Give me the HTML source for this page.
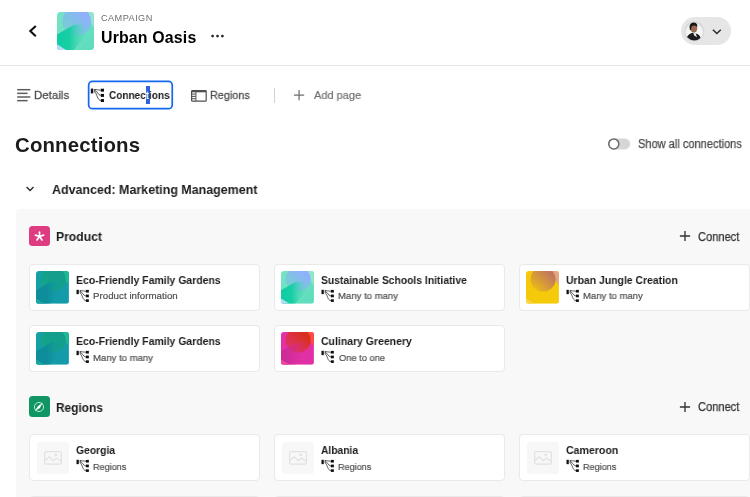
<!DOCTYPE html>
<html lang="en">
<head>
<meta charset="utf-8">
<title>Urban Oasis – Connections</title>
<style>
*{box-sizing:border-box;margin:0;padding:0}
html,body{width:750px;height:497px;overflow:hidden;background:#fff}
body{position:relative;font-family:"Liberation Sans",sans-serif;color:#222}
.t{position:absolute;white-space:nowrap;transform-origin:0 50%;will-change:transform}
.a{position:absolute}
.hdr{left:0;top:0;width:750px;height:66px;border-bottom:1px solid #e3e3e3;background:#fff}
.panel{left:16px;top:209px;width:734px;height:288px;background:#f8f8f8;border-radius:4px 0 0 0}
.card{position:absolute;width:231px;height:47px;background:#fff;border:1px solid #e9e9e9;border-radius:4px}
.thumb{position:absolute;left:6.3px;top:6px;width:32.9px;height:32.6px;border-radius:3px;overflow:hidden;display:block}
.ph{background:#f7f7f7;left:6.5px;top:6.6px;width:32.5px;height:32.4px}
svg{display:block;overflow:visible}
</style>
</head>
<body>
<div class="a hdr"></div>
<svg class="a" style="left:27px;top:23px" width="12" height="16" viewBox="0 0 12 16"><path d="M8.8 2.9L3.3 8.1L8.8 13.3" fill="none" stroke="#111" stroke-width="2.1"/></svg>
<div class="a" style="left:56.6px;top:12px;width:37.8px;height:38.2px"><div style="position:relative;width:100%;height:100%"><svg class="a" style="left:0;top:0;width:100%;height:100%;border-radius:3.5px;overflow:hidden" viewBox="0 0 32 32" preserveAspectRatio="none"><defs>
<linearGradient id="bh" x1="0" y1="0" x2="1" y2="1"><stop offset="0" stop-color="#79e3c6"/><stop offset="1" stop-color="#5bdcbb"/></linearGradient>
<linearGradient id="ch" x1="0" y1="1" x2="1" y2="0"><stop offset="0.1" stop-color="#72d2cc"/><stop offset="0.75" stop-color="#8fb1fb"/></linearGradient>
<linearGradient id="dh" x1="0" y1="0" x2="1" y2="0"><stop offset="0" stop-color="#0ecda2" stop-opacity="1"/><stop offset="0.35" stop-color="#0ecda2" stop-opacity="0.9"/><stop offset="0.85" stop-color="#4fd9b7" stop-opacity="0"/></linearGradient>
</defs>
<rect width="32" height="32" fill="url(#bh)"/>
<path d="M22 0H32V14Z" fill="#8fe6cf"/>
<circle cx="16.6" cy="8" r="12.2" fill="url(#ch)"/>
<path d="M0 18.8L14.5 10.6L30 10.6L30 13L14 32H0Z" fill="url(#dh)"/>
<path d="M0 27L8 32H0Z" fill="#b9dcf4"/>
</svg></div></div>
<svg class="a" style="left:210px;top:33px" width="16" height="6" viewBox="0 0 16 6"><g fill="#222"><circle cx="2.6" cy="3.1" r="1.35"/><circle cx="7.5" cy="3.1" r="1.35"/><circle cx="12.4" cy="3.1" r="1.35"/></g></svg>
<div class="a" style="left:681.3px;top:17.2px;width:49.8px;height:27.5px;border-radius:14px;background:#e6e6e6"></div>
<svg class="a" style="left:684.4px;top:20.5px" width="20.6" height="20.6" viewBox="0 0 20.6 20.6"><defs><radialGradient id="av" cx=".5" cy=".55" r=".55"><stop offset="0" stop-color="#fff"/><stop offset=".75" stop-color="#f4f4f4"/><stop offset="1" stop-color="#cfcfcf"/></radialGradient><clipPath id="avc"><circle cx="10.3" cy="10.3" r="9.3"/></clipPath></defs><circle cx="10.3" cy="10.3" r="10.3" fill="#dadada"/><circle cx="10.3" cy="10.3" r="9.3" fill="url(#av)"/><g clip-path="url(#avc)"><g transform="translate(10 11.2) scale(1.13) translate(-10 -12)"><path d="M2.8 20.6C3 16 5.5 13.6 8.6 12.6L11.4 13.2C14 13.6 16 15.2 16.6 20.6Z" fill="#1d1d1f"/><path d="M9.2 12.4L11.6 13.2L12.6 16.8L10.2 14.6Z" fill="#f2f2f2"/><ellipse cx="9.9" cy="8.6" rx="2.9" ry="3.8" fill="#9a6a4c"/><path d="M6.3 9.6C5.4 5.4 7.4 3.4 10 3.5C12.3 3.6 13.3 5.4 12.8 7.6C11.8 6 10 5.6 8.2 6.6C7.6 7.6 7.4 8.8 7.5 10.4Z" fill="#151515"/></g></g></svg>
<svg class="a" style="left:711px;top:27px" width="12" height="9" viewBox="0 0 12 9"><path d="M1.9 2.7L5.85 6.5L9.8 2.7" fill="none" stroke="#2c2c2c" stroke-width="1.5"/></svg>
<svg class="a" style="left:17px;top:88px" width="14" height="14" viewBox="0 0 14 14"><g stroke="#5c5c5c" stroke-width="1.5"><path d="M.2 1.7H13.3"/><path d="M.2 5.35H10.6"/><path d="M.2 9H13.3"/><path d="M.2 12.65H10.6"/></g></svg>
<svg class="a" style="left:86px;top:79px" width="90" height="33" viewBox="86 79 90 33"><rect x="88.65" y="81.4" width="83.6" height="27.3" rx="3.8" fill="#fff" stroke="#1468f0" stroke-width="1.7"/></svg>
<svg class="a" style="left:90px;top:88px" width="16" height="16" viewBox="0 0 16 16"><g transform="translate(0.80 0.60) scale(1.0 1.0)"><g fill="#111"><rect x="0" y="0" width="2.45" height="4.8"/><rect x="10" y="0.1" width="3.2" height="2.95"/><rect x="10" y="5.3" width="3.2" height="3"/><rect x="10" y="10.5" width="3.2" height="2.9"/></g><g fill="none" stroke="#111" stroke-width=".72"><path d="M3.6 .8C5.8 .8 7.5 1.6 10 1.6"/><path d="M3.9 2C6.8 2.4 6.9 6.6 10 6.8"/><path d="M4.1 3.6C6.5 5.4 6.3 11.6 10 11.9"/><path d="M3.9 .6V3.7"/></g></g></svg>
<div class="a" style="left:146.4px;top:86px;width:3.9px;height:17.6px;background:#2f63d9"></div>
<svg class="a" style="left:191px;top:89.8px" width="16" height="12" viewBox="0 0 16 12"><rect x=".6" y=".6" width="14.6" height="10.6" rx=".8" fill="none" stroke="#505050" stroke-width="1.2"/><path d="M.6 1.6H15.2" stroke="#505050" stroke-width="1.4"/><path d="M4.9 1.5V11" stroke="#505050" stroke-width="1"/><path d="M1 4.1H4.6M1 6.4H4.6M1 8.7H4.6" stroke="#505050" stroke-width="1"/></svg>
<div class="a" style="left:273.7px;top:87.5px;width:1px;height:15.5px;background:#d3d3d3"></div>
<svg class="a" style="left:293px;top:89px" width="12" height="12" viewBox="0 0 12 12"><path d="M6.05 1.1V11.3M.95 6.2H11.15" stroke="#6e6e6e" stroke-width="1.25" fill="none"/></svg>
<svg class="a" style="left:606px;top:136px" width="26" height="16" viewBox="606 136 26 16"><rect x="608" y="138.4" width="22.2" height="11" rx="5.5" fill="#d6d6d6"/><circle cx="613.8" cy="143.9" r="5" fill="#fff" stroke="#6a6a6a" stroke-width="1.5"/></svg>
<svg class="a" style="left:25px;top:184px" width="12" height="10" viewBox="0 0 12 10"><path d="M1.6 3.05L5.05 6.5L8.5 3.05" fill="none" stroke="#2c2c2c" stroke-width="1.4"/></svg>
<div class="a panel"></div>
<div class="a" style="left:29.2px;top:225.8px;width:20.6px;height:20.7px;border-radius:3.5px;background:#de3b80"></div><svg class="a" style="left:34.05px;top:231.3px" width="11" height="11" viewBox="-5 -5 10 10"><g stroke="#fff" stroke-width="1.55" stroke-linecap="round"><path d="M0 0L0 -3.9"/><path d="M0 0L3.7 -1.2"/><path d="M0 0L2.3 3.15"/><path d="M0 0L-2.3 3.15"/><path d="M0 0L-3.7 -1.2"/></g></svg>
<div class="a" style="left:29.2px;top:396.3px;width:20.7px;height:20.6px;border-radius:3.5px;background:#0f9663"></div><svg class="a" style="left:33.3px;top:400.8px" width="12" height="12" viewBox="-6 -6 12 12"><circle r="4.6" fill="none" stroke="#c8ecdc" stroke-width=".9"/><path d="M-4.4 4.2L-0.9 -0.9L3.8 -4.4L0.9 0.9Z" fill="#fff"/></svg>
<svg class="a" style="left:679.4px;top:230.2px" width="12" height="12" viewBox="0 0 12 12"><path d="M6 .9V11.1M.9 6H11.1" stroke="#333" stroke-width="1.35" fill="none"/></svg>
<svg class="a" style="left:679.4px;top:400.6px" width="12" height="12" viewBox="0 0 12 12"><path d="M6 .9V11.1M.9 6H11.1" stroke="#333" stroke-width="1.35" fill="none"/></svg>
<div class="card" style="left:29px;top:264px"><svg class="thumb" viewBox="0 0 32 32" preserveAspectRatio="none"><defs>
<linearGradient id="bk0" x1="0" y1="0" x2="1" y2="1"><stop offset="0" stop-color="#17a0a6"/><stop offset="1" stop-color="#149aab"/></linearGradient>
<linearGradient id="ck0" x1="0" y1="1" x2="1" y2="0"><stop offset="0.1" stop-color="#12a58a"/><stop offset="0.75" stop-color="#149d8c"/></linearGradient>
<linearGradient id="dk0" x1="0" y1="0" x2="1" y2="0"><stop offset="0" stop-color="#0d8c99" stop-opacity="1"/><stop offset="0.35" stop-color="#0d8c99" stop-opacity="0.9"/><stop offset="0.85" stop-color="#1399a6" stop-opacity="0"/></linearGradient>
</defs>
<rect width="32" height="32" fill="url(#bk0)"/>
<path d="M22 0H32V14Z" fill="#1db895"/>
<circle cx="16.6" cy="8" r="12.2" fill="url(#ck0)"/>
<path d="M0 18.8L14.5 10.6L30 10.6L30 13L14 32H0Z" fill="url(#dk0)"/>
<path d="M0 27L8 32H0Z" fill="#19a9a4"/>
</svg></div>
<svg class="a" style="left:76px;top:289px" width="16" height="16" viewBox="0 0 16 16"><g transform="translate(0.50 0.80) scale(0.935 0.905)"><g fill="#111"><rect x="0" y="0" width="2.45" height="4.8"/><rect x="10" y="0.1" width="3.2" height="2.95"/><rect x="10" y="5.3" width="3.2" height="3"/><rect x="10" y="10.5" width="3.2" height="2.9"/></g><g fill="none" stroke="#111" stroke-width=".72"><path d="M3.6 .8C5.8 .8 7.5 1.6 10 1.6"/><path d="M3.9 2C6.8 2.4 6.9 6.6 10 6.8"/><path d="M4.1 3.6C6.5 5.4 6.3 11.6 10 11.9"/><path d="M3.9 .6V3.7"/></g></g></svg>
<div class="card" style="left:274px;top:264px"><svg class="thumb" viewBox="0 0 32 32" preserveAspectRatio="none"><defs>
<linearGradient id="bk1" x1="0" y1="0" x2="1" y2="1"><stop offset="0" stop-color="#79e3c6"/><stop offset="1" stop-color="#5bdcbb"/></linearGradient>
<linearGradient id="ck1" x1="0" y1="1" x2="1" y2="0"><stop offset="0.1" stop-color="#72d2cc"/><stop offset="0.75" stop-color="#8fb1fb"/></linearGradient>
<linearGradient id="dk1" x1="0" y1="0" x2="1" y2="0"><stop offset="0" stop-color="#0ecda2" stop-opacity="1"/><stop offset="0.35" stop-color="#0ecda2" stop-opacity="0.9"/><stop offset="0.85" stop-color="#4fd9b7" stop-opacity="0"/></linearGradient>
</defs>
<rect width="32" height="32" fill="url(#bk1)"/>
<path d="M22 0H32V14Z" fill="#8fe6cf"/>
<circle cx="16.6" cy="8" r="12.2" fill="url(#ck1)"/>
<path d="M0 18.8L14.5 10.6L30 10.6L30 13L14 32H0Z" fill="url(#dk1)"/>
<path d="M0 27L8 32H0Z" fill="#b9dcf4"/>
</svg></div>
<svg class="a" style="left:321px;top:289px" width="16" height="16" viewBox="0 0 16 16"><g transform="translate(0.50 0.80) scale(0.935 0.905)"><g fill="#111"><rect x="0" y="0" width="2.45" height="4.8"/><rect x="10" y="0.1" width="3.2" height="2.95"/><rect x="10" y="5.3" width="3.2" height="3"/><rect x="10" y="10.5" width="3.2" height="2.9"/></g><g fill="none" stroke="#111" stroke-width=".72"><path d="M3.6 .8C5.8 .8 7.5 1.6 10 1.6"/><path d="M3.9 2C6.8 2.4 6.9 6.6 10 6.8"/><path d="M4.1 3.6C6.5 5.4 6.3 11.6 10 11.9"/><path d="M3.9 .6V3.7"/></g></g></svg>
<div class="card" style="left:519px;top:264px"><svg class="thumb" viewBox="0 0 32 32" preserveAspectRatio="none"><defs>
<linearGradient id="bk2" x1="0" y1="0" x2="1" y2="1"><stop offset="0" stop-color="#f4c80c"/><stop offset="1" stop-color="#f5cb0a"/></linearGradient>
<linearGradient id="ck2" x1="0" y1="1" x2="1" y2="0"><stop offset="0.1" stop-color="#edb818"/><stop offset="0.75" stop-color="#c0795c"/></linearGradient>
<linearGradient id="dk2" x1="0" y1="0" x2="1" y2="0"><stop offset="0" stop-color="#f3c60a" stop-opacity="0.3"/><stop offset="0.35" stop-color="#f3c60a" stop-opacity="0.1"/><stop offset="0.85" stop-color="#f5ca0c" stop-opacity="0"/></linearGradient>
</defs>
<rect width="32" height="32" fill="url(#bk2)"/>
<path d="M22 0H32V14Z" fill="#e4a680"/>
<circle cx="16.6" cy="8" r="12.2" fill="url(#ck2)"/>
<path d="M0 18.8L14.5 10.6L30 10.6L30 13L14 32H0Z" fill="url(#dk2)"/>
<path d="M0 27L8 32H0Z" fill="#f8d648"/>
</svg></div>
<svg class="a" style="left:566px;top:289px" width="16" height="16" viewBox="0 0 16 16"><g transform="translate(0.50 0.80) scale(0.935 0.905)"><g fill="#111"><rect x="0" y="0" width="2.45" height="4.8"/><rect x="10" y="0.1" width="3.2" height="2.95"/><rect x="10" y="5.3" width="3.2" height="3"/><rect x="10" y="10.5" width="3.2" height="2.9"/></g><g fill="none" stroke="#111" stroke-width=".72"><path d="M3.6 .8C5.8 .8 7.5 1.6 10 1.6"/><path d="M3.9 2C6.8 2.4 6.9 6.6 10 6.8"/><path d="M4.1 3.6C6.5 5.4 6.3 11.6 10 11.9"/><path d="M3.9 .6V3.7"/></g></g></svg>
<div class="card" style="left:29px;top:325px"><svg class="thumb" viewBox="0 0 32 32" preserveAspectRatio="none"><defs>
<linearGradient id="bk3" x1="0" y1="0" x2="1" y2="1"><stop offset="0" stop-color="#17a0a6"/><stop offset="1" stop-color="#149aab"/></linearGradient>
<linearGradient id="ck3" x1="0" y1="1" x2="1" y2="0"><stop offset="0.1" stop-color="#12a58a"/><stop offset="0.75" stop-color="#149d8c"/></linearGradient>
<linearGradient id="dk3" x1="0" y1="0" x2="1" y2="0"><stop offset="0" stop-color="#0d8c99" stop-opacity="1"/><stop offset="0.35" stop-color="#0d8c99" stop-opacity="0.9"/><stop offset="0.85" stop-color="#1399a6" stop-opacity="0"/></linearGradient>
</defs>
<rect width="32" height="32" fill="url(#bk3)"/>
<path d="M22 0H32V14Z" fill="#1db895"/>
<circle cx="16.6" cy="8" r="12.2" fill="url(#ck3)"/>
<path d="M0 18.8L14.5 10.6L30 10.6L30 13L14 32H0Z" fill="url(#dk3)"/>
<path d="M0 27L8 32H0Z" fill="#19a9a4"/>
</svg></div>
<svg class="a" style="left:76px;top:350px" width="16" height="16" viewBox="0 0 16 16"><g transform="translate(0.50 0.80) scale(0.935 0.905)"><g fill="#111"><rect x="0" y="0" width="2.45" height="4.8"/><rect x="10" y="0.1" width="3.2" height="2.95"/><rect x="10" y="5.3" width="3.2" height="3"/><rect x="10" y="10.5" width="3.2" height="2.9"/></g><g fill="none" stroke="#111" stroke-width=".72"><path d="M3.6 .8C5.8 .8 7.5 1.6 10 1.6"/><path d="M3.9 2C6.8 2.4 6.9 6.6 10 6.8"/><path d="M4.1 3.6C6.5 5.4 6.3 11.6 10 11.9"/><path d="M3.9 .6V3.7"/></g></g></svg>
<div class="card" style="left:274px;top:325px"><svg class="thumb" viewBox="0 0 32 32" preserveAspectRatio="none"><defs>
<linearGradient id="bk4" x1="0" y1="0" x2="1" y2="1"><stop offset="0" stop-color="#e331a8"/><stop offset="1" stop-color="#e130a4"/></linearGradient>
<linearGradient id="ck4" x1="0" y1="1" x2="1" y2="0"><stop offset="0.1" stop-color="#e0336c"/><stop offset="0.75" stop-color="#d8301e"/></linearGradient>
<linearGradient id="dk4" x1="0" y1="0" x2="1" y2="0"><stop offset="0" stop-color="#cb2a94" stop-opacity="1"/><stop offset="0.35" stop-color="#cb2a94" stop-opacity="0.55"/><stop offset="0.85" stop-color="#dc2fa2" stop-opacity="0"/></linearGradient>
</defs>
<rect width="32" height="32" fill="url(#bk4)"/>
<path d="M22 0H32V14Z" fill="#ff4c3c"/>
<circle cx="16.6" cy="8" r="12.2" fill="url(#ck4)"/>
<path d="M0 18.8L14.5 10.6L30 10.6L30 13L14 32H0Z" fill="url(#dk4)"/>
<path d="M0 27L8 32H0Z" fill="#ee4aa0"/>
</svg></div>
<svg class="a" style="left:321px;top:350px" width="16" height="16" viewBox="0 0 16 16"><g transform="translate(0.50 0.80) scale(0.935 0.905)"><g fill="#111"><rect x="0" y="0" width="2.45" height="4.8"/><rect x="10" y="0.1" width="3.2" height="2.95"/><rect x="10" y="5.3" width="3.2" height="3"/><rect x="10" y="10.5" width="3.2" height="2.9"/></g><g fill="none" stroke="#111" stroke-width=".72"><path d="M3.6 .8C5.8 .8 7.5 1.6 10 1.6"/><path d="M3.9 2C6.8 2.4 6.9 6.6 10 6.8"/><path d="M4.1 3.6C6.5 5.4 6.3 11.6 10 11.9"/><path d="M3.9 .6V3.7"/></g></g></svg>
<div class="card" style="left:29px;top:434px"><div class="thumb ph"><svg class="a" style="left:7.3px;top:9.6px" width="18" height="14" viewBox="0 0 18 14"><rect x=".6" y=".6" width="16.8" height="12.6" rx="1.6" fill="none" stroke="#e2e2e2" stroke-width="1.2"/><path d="M1 9.5L5.2 5.8L9.3 9.6L12.6 7.2L17 10.3" fill="none" stroke="#e2e2e2" stroke-width="1.2"/><circle cx="11.7" cy="3.9" r="1.3" fill="#e2e2e2"/></svg></div></div>
<svg class="a" style="left:76px;top:459px" width="16" height="16" viewBox="0 0 16 16"><g transform="translate(0.50 0.80) scale(0.935 0.905)"><g fill="#111"><rect x="0" y="0" width="2.45" height="4.8"/><rect x="10" y="0.1" width="3.2" height="2.95"/><rect x="10" y="5.3" width="3.2" height="3"/><rect x="10" y="10.5" width="3.2" height="2.9"/></g><g fill="none" stroke="#111" stroke-width=".72"><path d="M3.6 .8C5.8 .8 7.5 1.6 10 1.6"/><path d="M3.9 2C6.8 2.4 6.9 6.6 10 6.8"/><path d="M4.1 3.6C6.5 5.4 6.3 11.6 10 11.9"/><path d="M3.9 .6V3.7"/></g></g></svg>
<div class="card" style="left:274px;top:434px"><div class="thumb ph"><svg class="a" style="left:7.3px;top:9.6px" width="18" height="14" viewBox="0 0 18 14"><rect x=".6" y=".6" width="16.8" height="12.6" rx="1.6" fill="none" stroke="#e2e2e2" stroke-width="1.2"/><path d="M1 9.5L5.2 5.8L9.3 9.6L12.6 7.2L17 10.3" fill="none" stroke="#e2e2e2" stroke-width="1.2"/><circle cx="11.7" cy="3.9" r="1.3" fill="#e2e2e2"/></svg></div></div>
<svg class="a" style="left:321px;top:459px" width="16" height="16" viewBox="0 0 16 16"><g transform="translate(0.50 0.80) scale(0.935 0.905)"><g fill="#111"><rect x="0" y="0" width="2.45" height="4.8"/><rect x="10" y="0.1" width="3.2" height="2.95"/><rect x="10" y="5.3" width="3.2" height="3"/><rect x="10" y="10.5" width="3.2" height="2.9"/></g><g fill="none" stroke="#111" stroke-width=".72"><path d="M3.6 .8C5.8 .8 7.5 1.6 10 1.6"/><path d="M3.9 2C6.8 2.4 6.9 6.6 10 6.8"/><path d="M4.1 3.6C6.5 5.4 6.3 11.6 10 11.9"/><path d="M3.9 .6V3.7"/></g></g></svg>
<div class="card" style="left:519px;top:434px"><div class="thumb ph"><svg class="a" style="left:7.3px;top:9.6px" width="18" height="14" viewBox="0 0 18 14"><rect x=".6" y=".6" width="16.8" height="12.6" rx="1.6" fill="none" stroke="#e2e2e2" stroke-width="1.2"/><path d="M1 9.5L5.2 5.8L9.3 9.6L12.6 7.2L17 10.3" fill="none" stroke="#e2e2e2" stroke-width="1.2"/><circle cx="11.7" cy="3.9" r="1.3" fill="#e2e2e2"/></svg></div></div>
<svg class="a" style="left:566px;top:459px" width="16" height="16" viewBox="0 0 16 16"><g transform="translate(0.50 0.80) scale(0.935 0.905)"><g fill="#111"><rect x="0" y="0" width="2.45" height="4.8"/><rect x="10" y="0.1" width="3.2" height="2.95"/><rect x="10" y="5.3" width="3.2" height="3"/><rect x="10" y="10.5" width="3.2" height="2.9"/></g><g fill="none" stroke="#111" stroke-width=".72"><path d="M3.6 .8C5.8 .8 7.5 1.6 10 1.6"/><path d="M3.9 2C6.8 2.4 6.9 6.6 10 6.8"/><path d="M4.1 3.6C6.5 5.4 6.3 11.6 10 11.9"/><path d="M3.9 .6V3.7"/></g></g></svg>
<div class="card" style="left:29px;top:496px"></div>
<div class="card" style="left:274px;top:496px"></div>
<div class="card" style="left:519px;top:496px"></div>
<div class="t" style="left:101.2px;top:14.0px;font-size:9.2px;line-height:9.2px;font-weight:400;color:#6e6e6e;letter-spacing:0.429px;">CAMPAIGN</div>
<div class="t" style="left:100.6px;top:30.0px;font-size:15.9px;line-height:15.9px;font-weight:700;color:#000;letter-spacing:0.160px;">Urban Oasis</div>
<div class="t" style="left:33.9px;top:89.0px;font-size:11.6px;line-height:11.6px;font-weight:400;color:#505050;transform:scaleX(0.9912);-webkit-text-stroke:.3px #505050">Details</div>
<div class="t" style="left:210.2px;top:89.0px;font-size:11.6px;line-height:11.6px;font-weight:400;color:#505050;transform:scaleX(0.9366);-webkit-text-stroke:.3px #505050">Regions</div>
<div class="t" style="left:109.4px;top:90.0px;font-size:11.4px;line-height:11.4px;font-weight:700;color:#1c1c1c;transform:scaleX(0.8783);;color:transparent;background:linear-gradient(90deg,#1c1c1c 0,#1c1c1c 41.77px,#fff 41.77px,#fff 45.58px,#1c1c1c 45.58px);-webkit-background-clip:text;background-clip:text">Connections</div>
<div class="t" style="left:313.7px;top:89.0px;font-size:11.6px;line-height:11.6px;font-weight:400;color:#6e6e6e;transform:scaleX(0.9490);-webkit-text-stroke:.2px #6e6e6e">Add page</div>
<div class="t" style="left:15.2px;top:135.0px;font-size:20.4px;line-height:20.4px;font-weight:700;color:#1c1c1c;letter-spacing:0.160px;">Connections</div>
<div class="t" style="left:638.3px;top:138.0px;font-size:12px;line-height:12px;font-weight:400;color:#4b4b4b;transform:scaleX(0.9207);-webkit-text-stroke:.25px #4b4b4b">Show all connections</div>
<div class="t" style="left:51.5px;top:183.0px;font-size:13.1px;line-height:13.1px;font-weight:700;color:#1c1c1c;transform:scaleX(0.9505);">Advanced: Marketing Management</div>
<div class="t" style="left:56.2px;top:231.0px;font-size:12.6px;line-height:12.6px;font-weight:700;color:#1c1c1c;transform:scaleX(0.9638);">Product</div>
<div class="t" style="left:698.3px;top:231.0px;font-size:12px;line-height:12px;font-weight:400;color:#333;transform:scaleX(0.9256);-webkit-text-stroke:.25px #333">Connect</div>
<div class="t" style="left:56.3px;top:402.0px;font-size:12.6px;line-height:12.6px;font-weight:700;color:#1c1c1c;transform:scaleX(0.9437);">Regions</div>
<div class="t" style="left:698.3px;top:401.0px;font-size:12px;line-height:12px;font-weight:400;color:#333;transform:scaleX(0.9256);-webkit-text-stroke:.25px #333">Connect</div>
<div class="t" style="left:75.5px;top:275.0px;font-size:11.2px;line-height:11.2px;font-weight:700;color:#1c1c1c;transform:scaleX(0.9346);">Eco-Friendly Family Gardens</div>
<div class="t" style="left:92.6px;top:291.0px;font-size:9.7px;line-height:9.7px;font-weight:400;color:#4e4e4e;letter-spacing:0.039px;-webkit-text-stroke:.2px #4e4e4e">Product information</div>
<div class="t" style="left:321.4px;top:275.0px;font-size:11.2px;line-height:11.2px;font-weight:700;color:#1c1c1c;transform:scaleX(0.9234);">Sustainable Schools Initiative</div>
<div class="t" style="left:337.6px;top:291.0px;font-size:9.7px;line-height:9.7px;font-weight:400;color:#4e4e4e;transform:scaleX(0.9867);-webkit-text-stroke:.2px #4e4e4e">Many to many</div>
<div class="t" style="left:565.5px;top:275.0px;font-size:11.2px;line-height:11.2px;font-weight:700;color:#1c1c1c;transform:scaleX(0.9314);">Urban Jungle Creation</div>
<div class="t" style="left:582.6px;top:291.0px;font-size:9.7px;line-height:9.7px;font-weight:400;color:#4e4e4e;transform:scaleX(0.9833);-webkit-text-stroke:.2px #4e4e4e">Many to many</div>
<div class="t" style="left:75.5px;top:336.0px;font-size:11.2px;line-height:11.2px;font-weight:700;color:#1c1c1c;transform:scaleX(0.9346);">Eco-Friendly Family Gardens</div>
<div class="t" style="left:92.6px;top:353.0px;font-size:9.7px;line-height:9.7px;font-weight:400;color:#4e4e4e;transform:scaleX(0.9867);-webkit-text-stroke:.2px #4e4e4e">Many to many</div>
<div class="t" style="left:321.4px;top:336.0px;font-size:11.2px;line-height:11.2px;font-weight:700;color:#1c1c1c;transform:scaleX(0.9361);">Culinary Greenery</div>
<div class="t" style="left:338.6px;top:353.0px;font-size:9.7px;line-height:9.7px;font-weight:400;color:#4e4e4e;transform:scaleX(0.9596);-webkit-text-stroke:.2px #4e4e4e">One to one</div>
<div class="t" style="left:76.4px;top:445.0px;font-size:11.2px;line-height:11.2px;font-weight:700;color:#1c1c1c;transform:scaleX(0.9238);">Georgia</div>
<div class="t" style="left:92.7px;top:462.0px;font-size:9.7px;line-height:9.7px;font-weight:400;color:#4e4e4e;transform:scaleX(0.9353);-webkit-text-stroke:.2px #4e4e4e">Regions</div>
<div class="t" style="left:321.4px;top:445.0px;font-size:11.2px;line-height:11.2px;font-weight:700;color:#1c1c1c;transform:scaleX(0.9171);">Albania</div>
<div class="t" style="left:337.7px;top:462.0px;font-size:9.7px;line-height:9.7px;font-weight:400;color:#4e4e4e;transform:scaleX(0.9353);-webkit-text-stroke:.2px #4e4e4e">Regions</div>
<div class="t" style="left:566.4px;top:445.0px;font-size:11.2px;line-height:11.2px;font-weight:700;color:#1c1c1c;transform:scaleX(0.9455);">Cameroon</div>
<div class="t" style="left:582.7px;top:462.0px;font-size:9.7px;line-height:9.7px;font-weight:400;color:#4e4e4e;transform:scaleX(0.9353);-webkit-text-stroke:.2px #4e4e4e">Regions</div>
</body>
</html>
